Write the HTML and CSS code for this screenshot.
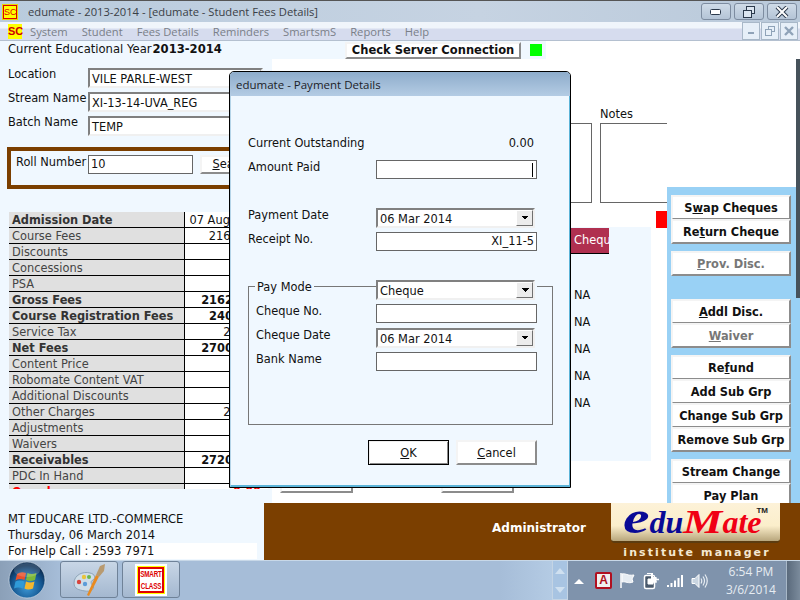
FILE: index.html
```html
<!DOCTYPE html>
<html lang="en">
<head>
  <meta charset="UTF-8" />
  <title>edumate - Student Fees Details</title>
  <link rel="stylesheet" href="styles.css">
</head>
<body>
  <div class="titlebar">
    <div class="sc-logo">SC</div>
    <div class="title-text">edumate - 2013-2014 - [edumate - Student Fees Details]</div>
    <div class="win-btns">
      <div class="win-btn">
        <svg width="12" height="8" viewBox="0 0 12 8"><rect x="0.5" y="1.5" width="10" height="5" rx="1" fill="#fff" stroke="#2c3a4c"/></svg>
      </div>
      <div class="win-btn">
        <svg width="14" height="14" viewBox="0 0 14 14" fill="#dbe5f0" stroke="#2c3a4c"><rect x="4.5" y="1.5" width="8" height="7"/><rect x="1.5" y="5.5" width="8" height="7"/></svg>
      </div>
      <div class="win-btn">
        <svg width="14" height="12" viewBox="0 0 14 12"><path d="M2 1l10 10M12 1L2 11" stroke="#2c3a4c" stroke-width="4"/><path d="M2 1l10 10M12 1L2 11" stroke="#fff" stroke-width="2"/></svg>
      </div>
    </div>
  </div>

  <div class="menubar">
    <div class="menu-logo">SC</div>
    <div class="menu-items">
      <span>System</span>
      <span>Student</span>
      <span>Fees Details</span>
      <span>Reminders</span>
      <span>SmartsmS</span>
      <span>Reports</span>
      <span>Help</span>
    </div>
    <div class="mdi-btns">
      <div class="mdi-btn"><svg width="8" height="8" viewBox="0 0 8 8"><rect x="1" y="5" width="6" height="2" fill="#8fa3b8"/></svg></div>
      <div class="mdi-btn"><svg width="10" height="10" viewBox="0 0 10 10" fill="none" stroke="#8fa3b8"><rect x="3.5" y="0.5" width="6" height="5"/><rect x="0.5" y="3.5" width="6" height="6" fill="#e8f0f8"/></svg></div>
      <div class="mdi-btn"><svg width="10" height="10" viewBox="0 0 10 10"><path d="M1 1l8 8M9 1L1 9" stroke="#8fa3b8" stroke-width="2.4"/></svg></div>
    </div>
  </div>

  <div class="main">
    <div class="left-panel">
      <div class="year-line">Current Educational Year<b>2013-2014</b></div>
      <div class="pick-row">
        <label>Location</label>
        <div class="combo wide"><span>VILE PARLE-WEST</span></div>
      </div>
      <div class="pick-row">
        <label>Stream Name</label>
        <div class="combo wide"><span>XI-13-14-UVA_REG</span></div>
      </div>
      <div class="pick-row">
        <label>Batch Name</label>
        <div class="combo wide"><span>TEMP</span></div>
      </div>
      <div class="roll-box">
        <label>Roll Number</label>
        <div class="field roll-field">10</div>
        <div class="raised search-btn"><u>S</u>earch</div>
      </div>
      <div class="fees-clip">
        <table class="fees">
          <tr class="strong"><td class="lbl">Admission Date</td><td class="val date">07 Aug 2013</td></tr>
          <tr><td class="lbl">Course Fees</td><td class="val">21600.00</td></tr>
          <tr><td class="lbl">Discounts</td><td class="val"></td></tr>
          <tr><td class="lbl">Concessions</td><td class="val"></td></tr>
          <tr><td class="lbl">PSA</td><td class="val"></td></tr>
          <tr class="strong"><td class="lbl">Gross Fees</td><td class="val">21620.00</td></tr>
          <tr class="strong"><td class="lbl">Course Registration Fees</td><td class="val">2400.00</td></tr>
          <tr><td class="lbl">Service Tax</td><td class="val">297.00</td></tr>
          <tr class="strong"><td class="lbl">Net Fees</td><td class="val">27000.00</td></tr>
          <tr><td class="lbl">Content Price</td><td class="val"></td></tr>
          <tr><td class="lbl">Robomate Content VAT</td><td class="val"></td></tr>
          <tr><td class="lbl">Additional Discounts</td><td class="val"></td></tr>
          <tr><td class="lbl">Other Charges</td><td class="val">200.00</td></tr>
          <tr><td class="lbl">Adjustments</td><td class="val"></td></tr>
          <tr><td class="lbl">Waivers</td><td class="val"></td></tr>
          <tr class="strong"><td class="lbl">Receivables</td><td class="val">27200.00</td></tr>
          <tr><td class="lbl">PDC In Hand</td><td class="val"></td></tr>
          <tr class="strong overdue"><td class="lbl">Overdue</td><td class="val">0.00</td></tr>
        </table>
      </div>
    </div>

    <div class="center">
      <div class="top-strip">
        <div class="raised check-btn">Check Server Connection</div>
        <div class="green-dot"></div>
      </div>
      <div class="center-body">
        <div class="fee-area">
          <div class="notes-label">Notes</div>
          <div class="boxes">
            <div class="box-left"></div>
            <div class="box-notes"></div>
          </div>
          <div class="cheque-row">
            <div class="cheque-panel">
              <div class="cheque-head">Cheque</div>
              <div class="cheque-rows">
                <div>NA</div>
                <div>NA</div>
                <div>NA</div>
                <div>NA</div>
                <div>NA</div>
              </div>
            </div>
            <div class="red-flag"></div>
          </div>
          <div class="hidden-btns">
            <div class="raised hidden-btn"></div>
            <div class="raised hidden-btn"></div>
          </div>
        </div>
        <div class="side">
          <div class="side-group">
            <div class="raised side-btn">S<u>w</u>ap Cheques</div>
            <div class="raised side-btn">Re<u>t</u>urn Cheque</div>
          </div>
          <div class="side-group">
            <div class="raised side-btn off"><u>P</u>rov. Disc.</div>
          </div>
          <div class="side-group gap-big">
            <div class="raised side-btn"><u>A</u>ddl Disc.</div>
            <div class="raised side-btn off"><u>W</u>aiver</div>
          </div>
          <div class="side-group">
            <div class="raised side-btn">Re<u>f</u>und</div>
            <div class="raised side-btn">Add Sub Grp</div>
            <div class="raised side-btn">Change Sub Grp</div>
            <div class="raised side-btn">Remove Sub Grp</div>
          </div>
          <div class="side-group">
            <div class="raised side-btn">Stream Change</div>
            <div class="raised side-btn">Pay Plan</div>
          </div>
        </div>
        <div class="side-edge"></div>
      </div>
    </div>
  </div>

  <div class="footer">
    <div class="footer-left">
      <div>MT EDUCARE LTD.-COMMERCE</div>
      <div>Thursday, 06 March 2014</div>
      <div class="help-line">For Help Call : 2593 7971</div>
    </div>
    <div class="footer-right">
      <div class="admin">Administrator</div>
      <div class="brand">
        <div class="brand-plate">
          <span class="tm">TM</span>
          <span class="b-edu"><span class="big big-e">e</span>du</span><span class="b-mate"><span class="big big-m">M</span>ate</span>
        </div>
        <div class="brand-sub">institute manager</div>
      </div>
    </div>
  </div>

  <div class="taskbar">
    <div class="start-orb">
      <svg width="38" height="38" viewBox="0 0 38 38">
        <defs>
          <radialGradient id="orb" cx="50%" cy="70%" r="60%">
            <stop offset="0" stop-color="#3d9ad8"/>
            <stop offset="0.7" stop-color="#14558f"/>
            <stop offset="1" stop-color="#0c2f55"/>
          </radialGradient>
        </defs>
        <circle cx="19" cy="19" r="18" fill="url(#orb)" stroke="#dfe8f0" stroke-opacity="0.6"/>
        <path d="M9 13q4-3 9-1l-1.500 7q-5-2-9 0.500z" fill="#e8512c"/>
        <path d="M19.500 12q4 2 9 0l-1.500 7q-5 2-9 0z" fill="#7cb83a"/>
        <path d="M7.500 20.500q4-2 9 0l-1.500 7q-5-2-9 0z" fill="#2f9ad8"/>
        <path d="M18 20.500q4 2 8.500 0l-1.500 7q-5 2-8.500 0z" fill="#f4b72e"/>
        <ellipse cx="19" cy="9" rx="13" ry="7" fill="#fff" opacity="0.16"/>
      </svg>
    </div>
    <div class="task-btn">
      <svg width="34" height="36" viewBox="0 0 34 36">
        <path d="M2 21c0-8 9-12 16-10 5 1 6 5 3 7-3 1-2 4 0 6 2 3-2 6-8 5C7 28 2 27 2 21z" fill="#cfdde8" stroke="#8ea4b8"/>
        <circle cx="7" cy="20" r="2.200" fill="#d8443c"/>
        <circle cx="12" cy="15" r="2.200" fill="#e8c43c"/>
        <circle cx="17" cy="15" r="2" fill="#6cb84c"/>
        <circle cx="13" cy="22" r="2.200" fill="#5c9cd8"/>
        <path d="M15 33l9-20 3 1.500-10 19.500z" fill="#e88a20"/>
        <path d="M24 13l4-9 5-2-1 7-5 6z" fill="#b89a70"/>
      </svg>
    </div>
    <div class="task-btn">
      <div class="smart-logo"><div class="smart-text">SMART<br>CLASS</div></div>
    </div>
    <div class="task-fill"></div>
    <div class="task-scroll">
      <svg width="12" height="8" viewBox="0 0 12 8"><path d="M1 7l5-6 5 6z" fill="#cfe0f0"/></svg>
      <svg width="12" height="8" viewBox="0 0 12 8"><path d="M1 1l5 6 5-6z" fill="#cfe0f0"/></svg>
    </div>
    <div class="tray">
      <svg class="tray-up" width="10" height="6" viewBox="0 0 10 6"><path d="M0 6l5-5 5 5z" fill="#fff"/></svg>
      <div class="tray-a">A</div>
      <svg width="17" height="17" viewBox="0 0 17 17"><path d="M2 1v15" stroke="#fff" stroke-width="1.500"/><path d="M3 2c4-1 5 2 12 1l-2 4 1 3c-5 2-7-1-11 0z" fill="#e6ecf2" stroke="#fff"/></svg>
      <svg width="17" height="18" viewBox="0 0 17 18"><rect x="1.500" y="3.500" width="10" height="13" rx="1.500" fill="#4a5a6c" stroke="#fff" stroke-width="1.500"/><path d="M4 1.500h6M5 7h5v5H5z" stroke="#fff" fill="#fff"/><path d="M8 6h5v1.500h3M8 10h5V8.500" stroke="#fff" stroke-width="1.500" fill="none"/><path d="M8 2h2v3h3v5H8z" fill="#fff"/></svg>
      <svg width="17" height="14" viewBox="0 0 17 14" fill="#fff"><rect x="0" y="11" width="2" height="2"/><rect x="3.500" y="9" width="2" height="4"/><rect x="7" y="6.500" width="2" height="6.500"/><rect x="10.500" y="4" width="2" height="9"/><rect x="14" y="1" width="2" height="12"/></svg>
      <svg width="17" height="16" viewBox="0 0 17 16" fill="none"><path d="M1 5.500h3l4-4v13l-4-4H1z" fill="#c8d4e0" stroke="#fff"/><path d="M10 5.500q1.500 2.500 0 5M12 3.500q3 4.500 0 9M14 1.500q4.500 6.500 0 13" stroke="#e6ecf2" stroke-width="1.200"/></svg>
      <div class="clock">
        <div>6:54 PM</div>
        <div>3/6/2014</div>
      </div>
    </div>
    <div class="show-desktop"></div>
  </div>

  <div class="dialog">
    <div class="dlg-title">edumate - Payment Details</div>
    <div class="dlg-body">
      <div class="form-row">
        <label>Current Outstanding</label>
        <div class="amount">0.00</div>
      </div>
      <div class="form-row">
        <label>Amount Paid</label>
        <div class="field with-caret"><i class="caret"></i></div>
      </div>
      <div class="form-row row-gap">
        <label>Payment Date</label>
        <div class="combo"><span>06 Mar 2014</span></div>
      </div>
      <div class="form-row">
        <label>Receipt No.</label>
        <div class="field right">XI_11-5</div>
      </div>
      <div class="paymode">
        <div class="form-row sub head-row">
          <label class="legend">Pay Mode</label>
          <div class="combo masked"><span>Cheque</span></div>
        </div>
        <div class="form-row sub">
          <label>Cheque No.</label>
          <div class="field"></div>
        </div>
        <div class="form-row sub">
          <label>Cheque Date</label>
          <div class="combo"><span>06 Mar 2014</span></div>
        </div>
        <div class="form-row sub">
          <label>Bank Name</label>
          <div class="field"></div>
        </div>
      </div>
      <div class="dlg-actions">
        <div class="raised dlg-btn default"><u>O</u>K</div>
        <div class="raised dlg-btn"><u>C</u>ancel</div>
      </div>
    </div>
  </div>
</body>
</html>
```

FILE: styles.css
```css
html, body {
  margin: 0;
  padding: 0;
}

body {
  position: relative;
  width: 800px;
  height: 600px;
  overflow: hidden;
  font-family: "DejaVu Sans", sans-serif;
  font-size: 11.400px;
  color: #111;
  background: #fff;
}

/* title bar */
.titlebar {
  height: 21px;
  border-top: 1px solid #555;
  display: flex;
  align-items: center;
  background: linear-gradient(to right, #b9cbdd, #c6d3e2 60%, #b9c9da);
}

.sc-logo {
  width: 12px;
  height: 12px;
  margin-left: 3px;
  border: 1px solid #d00;
  outline: 1px solid #e8d800;
  background: #ff0;
  color: #d00;
  font: 9px/12px "Liberation Sans", sans-serif;
  text-align: center;
}

.title-text {
  margin-left: 11px;
  font-family: "Open Sans", sans-serif;
  font-size: 11.200px;
  color: #3a4046;
}

.win-btns {
  margin-left: auto;
  margin-right: 3px;
  display: flex;
  gap: 3px;
}

.win-btn {
  width: 28px;
  height: 15px;
  border: 1px solid #7d8ca0;
  border-radius: 3px;
  display: flex;
  align-items: center;
  justify-content: center;
  background: linear-gradient(#cfdbe8, #b4c4d6);
}

/* menu */
.menubar {
  height: 18px;
  display: flex;
  align-items: center;
  background: linear-gradient(#f0f5fb 0, #f0f5fb 6px, #d6dcee 7px, #d6dcee 100%);
  border-bottom: 1px solid #b4c0d0;
}

.menu-logo {
  width: 14px;
  height: 15px;
  margin-left: 8px;
  background: #ff0;
  color: #c00;
  font: bold 11px/15px "Liberation Sans", sans-serif;
  text-align: center;
}

.menu-items {
  margin-left: 8px;
  display: flex;
  gap: 14px;
  font-family: "Open Sans", sans-serif;
  font-size: 11.200px;
  color: #7a7f88;
}

.mdi-btns {
  margin-left: auto;
  margin-right: 2px;
  display: flex;
  gap: 1px;
}

.mdi-btn {
  width: 16px;
  height: 16px;
  border: 1px solid #a8b8c8;
  display: flex;
  align-items: center;
  justify-content: center;
  background: #e6eff8;
}

/* main area */
.main {
  height: 462px;
  display: flex;
}

.left-panel {
  width: 272px;
  flex: none;
  background: #f0f8ff;
  overflow: hidden;
}

.year-line {
  height: 14px;
  padding: 1px 0 0 8px;
  line-height: 14px;
  font-size: 11.600px;
}

.year-line b {
  margin-left: 1px;
}

.pick-row {
  display: flex;
  height: 24px;
  padding-left: 8px;
}

.pick-row:nth-child(2) {
  margin-top: 12px;
}

.pick-row label {
  width: 80px;
  margin-top: -1px;
  line-height: 14px;
  flex: none;
}

.roll-box {
  width: 240px;
  height: 34px;
  margin: 7px 0 0 7px;
  border: 4px solid #7b3f00;
  display: flex;
  align-items: flex-start;
  padding-left: 5px;
  background: #f0f8ff;
}

.roll-box label {
  width: 72px;
  margin-top: 4px;
  line-height: 14px;
  flex: none;
}

.roll-field {
  width: 99px;
  margin-top: 4px;
  flex: none;
}

.search-btn {
  width: 60px;
  height: 15px;
  margin: 4px 0 0 7px;
  line-height: 15px;
  text-align: center;
  flex: none;
}

.fees-clip {
  height: 277px;
  margin: 23px 0 0 9px;
  overflow: hidden;
}

.fees {
  width: 259px;
  border-collapse: collapse;
  table-layout: fixed;
}

.fees td {
  height: 14px;
  padding: 1px 0 0;
  border-bottom: 1px solid #000;
  line-height: 14px;
  white-space: nowrap;
  overflow: hidden;
}

.lbl {
  width: 175px;
  padding-left: 3px !important;
  box-sizing: border-box;
  background: #e0e0e0;
  color: #444;
}

.val {
  border-left: 1px solid #000;
  padding-right: 5px !important;
  background: #fff;
  text-align: right;
}

.strong .lbl,
.strong .val {
  font-weight: bold;
}

.strong .val {
  padding-right: 7px !important;
}

.strong .lbl {
  color: #333;
}

.strong .val.date {
  text-align: left;
  padding-left: 5px !important;
  font-weight: normal;
}

.overdue .lbl,
.overdue .val {
  color: #f00;
}

.center {
  flex: 1;
  min-width: 0;
  display: flex;
  flex-direction: column;
}

.top-strip {
  width: 201px;
  height: 18px;
  padding-left: 73px;
  display: flex;
  background: #f0f8ff;
}

.check-btn {
  width: 172px;
  height: 13px;
  margin-top: 1px;
  border-color: #e8e8e8 #8c8c8c #8c8c8c #e8e8e8;
  font-size: 11.500px;
  font-weight: bold;
  line-height: 13px;
  text-align: center;
  background: #f0f0f0;
}

.green-dot {
  width: 12px;
  height: 12px;
  margin: 3px 0 0 9px;
  background: #0f0;
}

.center-body {
  flex: 1;
  min-height: 0;
  display: flex;
}

.fee-area {
  width: 395px;
  flex: none;
  overflow: hidden;
  background: #fff;
}

.notes-label {
  height: 17px;
  margin: 47px 0 0 328px;
  line-height: 16px;
  color: #111;
}

.boxes {
  height: 80px;
  display: flex;
  gap: 8px;
}

.box-left {
  width: 320px;
  box-sizing: border-box;
  flex: none;
  border: 1px solid #666;
}

.box-notes {
  flex: 1;
  border: 1px solid #666;
  border-right: 0;
}

.cheque-row {
  display: flex;
  align-items: flex-start;
  justify-content: flex-end;
  margin-top: 8px;
  gap: 5px;
}

.cheque-panel {
  width: 80px;
  height: 234px;
  margin-top: 16px;
  background: #f0f8ff;
}

.cheque-head {
  width: 35px;
  height: 25px;
  margin-top: 1px;
  padding-left: 3px;
  border-bottom: 1px solid #000;
  overflow: hidden;
  background: #b03050;
  color: #fff;
  line-height: 25px;
  white-space: nowrap;
}

.cheque-rows {
  margin-top: 28px;
  padding-left: 3px;
}

.cheque-rows div {
  height: 27px;
  line-height: 27px;
}

.red-flag {
  width: 11px;
  height: 17px;
  flex: none;
  background: #f00;
}

.hidden-btns {
  display: flex;
  gap: 88px;
  margin: 7px 0 0 8px;
}

.hidden-btn {
  width: 69px;
  height: 21px;
  border-right-color: #555;
  border-bottom-color: #555;
}

.side {
  width: 129px;
  flex: none;
  height: 316px;
  margin-top: 128px;
  padding: 8px 5px 0 4px;
  box-sizing: border-box;
  overflow: hidden;
  display: flex;
  flex-direction: column;
  gap: 7px;
  background: #99d1f5;
}

.side-group {
  display: flex;
  flex-direction: column;
}

.gap-big {
  margin-top: 16px;
}

.side-btn {
  height: 21px;
  flex: none;
  font-weight: bold;
  line-height: 23px;
  text-align: center;
  color: #111;
}

.side-btn + .side-btn {
  margin-top: -1px;
}

.side-btn.off {
  color: #777;
}

.side-edge {
  flex: 1;
  background: linear-gradient(#46525b 239px, #99d1f5 239px);
}

.raised {
  border: 2px solid;
  border-color: #f4f4f4 #8c8c8c #8c8c8c #f4f4f4;
  background: #fff;
}

/* footer */
.footer {
  height: 57px;
  display: flex;
}

.footer-left {
  width: 264px;
  flex: none;
  padding: 8px 0 0 8px;
  box-sizing: border-box;
  background: #f0f8ff;
  font-size: 11.500px;
  line-height: 16px;
}

.help-line {
  width: 249px;
  background: #fff;
}

.footer-right {
  flex: 1;
  display: flex;
  background: #7b3f00;
}

.admin {
  margin: 18px 0 0 228px;
  width: 119px;
  flex: none;
  color: #fff;
  font-size: 12px;
  font-weight: bold;
  line-height: 14px;
}

.brand {
  width: 169px;
  flex: none;
}

.brand-plate {
  position: relative;
  height: 38px;
  padding-left: 12px;
  border-radius: 0 0 4px 4px;
  border-bottom: 2px solid #5c3c10;
  background: linear-gradient(#fdf2d8, #fbeecb 60%, #b8a67c);
  font-family: "Liberation Serif", serif;
  font-style: italic;
  font-weight: bold;
  font-size: 32px;
  line-height: 38px;
  white-space: nowrap;
}

.big {
  display: inline-block;
  line-height: 0;
  transform: scaleX(1.3);
  transform-origin: left;
}

.big-e {
  font-size: 46px;
  margin-right: 6px;
}

.big-m {
  font-size: 34px;
  margin-right: 9px;
}

.b-edu {
  color: #0a0a96;
}

.b-mate {
  color: #f00014;
}

.tm {
  position: absolute;
  top: 4px;
  right: 12px;
  font: bold 8px/8px "Liberation Sans", sans-serif;
  color: #222;
}

.brand-sub {
  margin-top: 3px;
  padding-left: 3px;
  text-align: center;
  color: #f4e8d0;
  font-size: 11px;
  font-weight: bold;
  letter-spacing: 2.100px;
  line-height: 14px;
  white-space: nowrap;
}

/* taskbar */
.taskbar {
  height: 40px;
  display: flex;
  background: linear-gradient(to right, #8ba0b8 0, #a6bdd8 60px, #a6bdd8 500px, #b4cbe4 552px);
  border-top: 1px solid #c8d8e8;
  box-sizing: border-box;
}

.start-orb {
  width: 60px;
  flex: none;
  padding: 0 0 0 8px;
  box-sizing: border-box;
}

.task-btn {
  width: 58px;
  height: 37px;
  margin-right: 4px;
  flex: none;
  border: 1px solid #6f8298;
  border-radius: 3px;
  box-sizing: border-box;
  display: flex;
  align-items: center;
  justify-content: center;
  background: linear-gradient(#c8d6e6, #a4b8d0);
}

.smart-logo {
  width: 22px;
  height: 22px;
  border: 2px solid #e00000;
  outline: 1px solid #ff0;
  box-shadow: 0 0 0 3px #fff;
  display: flex;
  align-items: center;
  justify-content: center;
  background: #fff;
  overflow: hidden;
}

.smart-text {
  color: #d00;
  font: bold 6.300px/9px "Liberation Sans", sans-serif;
  text-align: center;
  letter-spacing: -0.200px;
  transform: scaleY(1.300);
}

.task-fill {
  flex: 1;
}

.task-scroll {
  width: 16px;
  flex: none;
  border: 1px solid #c4d4e4;
  border-top: 0;
  box-sizing: border-box;
  display: flex;
  flex-direction: column;
  justify-content: space-around;
  align-items: center;
  background: #a8c4e2;
}

.tray {
  width: 218px;
  flex: none;
  padding-left: 6px;
  display: flex;
  align-items: center;
  gap: 7px;
  box-sizing: border-box;
  background: #7f93ac;
}

.tray-up {
  margin-right: 4px;
}

.tray-a {
  width: 13px;
  height: 13px;
  border: 2px solid #b01020;
  border-radius: 2px;
  background: #f0f0f0;
  color: #b01020;
  font: bold 12px/13px "Liberation Sans", sans-serif;
  text-align: center;
}

.clock {
  margin: 1px 0 0 11px;
  color: #e6ecf2;
  font-family: "Open Sans", sans-serif;
  font-size: 12px;
  line-height: 18px;
  text-align: center;
  white-space: nowrap;
}

.show-desktop {
  width: 14px;
  flex: none;
  box-sizing: border-box;
  background: linear-gradient(to right, #5a6a7c, #7b8b9c);
  border-left: 1px solid #a8b8c8;
}

/* payment dialog */
.dialog {
  position: absolute;
  left: 229px;
  top: 71px;
  width: 342px;
  height: 417px;
  box-sizing: border-box;
  border: 1px solid #000;
  border-radius: 5px 5px 0 0;
  display: flex;
  flex-direction: column;
  overflow: hidden;
  background: #f0f8ff;
}

.dlg-title {
  height: 24px;
  flex: none;
  padding-left: 6px;
  background: linear-gradient(#8eaccb, #b4cce4);
  font-family: "Open Sans", sans-serif;
  font-size: 11.500px;
  line-height: 26px;
  color: #1c2228;
}

.dlg-body {
  flex: 1;
  box-sizing: border-box;
  padding: 40px 0 0 17px;
  border: solid #5cb4d8;
  border-width: 0 1px 2px 1px;
  border-left-color: #b4d4e8;
}

.form-row {
  display: grid;
  grid-template-columns: 128px 161px;
  height: 24px;
}

.form-row label {
  line-height: 14px;
}

.row-gap {
  margin-top: 24px;
}

.amount {
  padding-right: 3px;
  text-align: right;
  line-height: 14px;
}

.field {
  height: 17px;
  border: 1px solid #666;
  background: #fff;
  line-height: 17px;
  padding: 0 2px;
  white-space: nowrap;
}

.field.right {
  text-align: right;
}

.with-caret {
  display: flex;
  justify-content: flex-end;
  align-items: center;
}

.caret {
  width: 1px;
  height: 14px;
  margin-right: 1px;
  background: #000;
}

.combo {
  height: 16px;
  width: 155px;
  border: 2px solid;
  border-color: #808080 #f0f0f0 #f0f0f0 #808080;
  display: flex;
  justify-content: space-between;
  background: #fff;
  line-height: 19px;
}

.combo span {
  padding-left: 2px;
  white-space: nowrap;
}

.combo::after {
  content: "";
  width: 15px;
  height: 14px;
  border: 1px solid;
  border-color: #fff #707070 #707070 #fff;
  background:
    linear-gradient(45deg, transparent 50%, #000 50%) 3.500px 5px / 4px 4px no-repeat,
    linear-gradient(-45deg, transparent 50%, #000 50%) 7.500px 5px / 4px 4px no-repeat,
    #ececec;
  flex: none;
}

.combo.wide {
  width: 171px;
  flex: none;
}

.combo.masked {
  box-shadow: 2px 0 0 #f0f8ff;
}

.paymode {
  width: 303px;
  height: 137px;
  margin-top: 30px;
  border: 1px solid #777;
}

.form-row.sub {
  grid-template-columns: 120px 161px;
  padding-left: 7px;
}

.head-row {
  margin-top: -7px;
}

.form-row .legend {
  justify-self: start;
  height: 14px;
  margin-left: -1px;
  padding: 0 2px;
  background: #f0f8ff;
}

.dlg-actions {
  display: flex;
  justify-content: flex-end;
  gap: 7px;
  width: 289px;
  margin-top: 15px;
}

.dlg-btn {
  width: 77px;
  height: 21px;
  line-height: 23px;
  text-align: center;
}

.dlg-btn.default {
  border: 1px solid #000;
  box-shadow: inset 1px 1px 0 #eee, inset -1px -1px 0 #888;
  width: 79px;
  height: 23px;
  line-height: 25px;
}
```
